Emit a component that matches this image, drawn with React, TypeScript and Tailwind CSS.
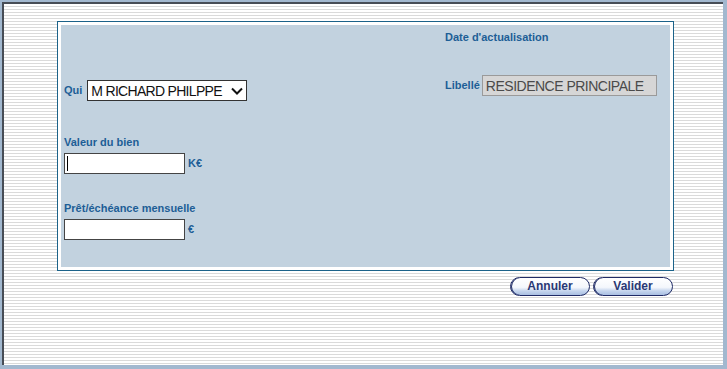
import { useState } from "react";

const label = "text-[11px] font-bold text-[#1d5e96] leading-[13px]";

function PillButton({ children }: { children: string }) {
  return (
    <button
      type="button"
      className="w-[80px] h-[19px] rounded-full border border-[#1f2b66] bg-[linear-gradient(to_bottom,#ffffff_0%,#f4f7fc_55%,#c6d6ee_75%,#a9bfe2_100%)] text-[12px] font-bold leading-[17px] text-[#2a3874] shadow-[inset_1px_0_0_#1f2b66]"
    >
      {children}
    </button>
  );
}

function Chevron() {
  return (
    <svg width="12" height="8" viewBox="0 0 12 8" className="shrink-0">
      <path d="M1 1.5 L6 6.5 L11 1.5" fill="none" stroke="#111" strokeWidth="2" />
    </svg>
  );
}

export default function App() {
  const [qui] = useState("M RICHARD PHILPPE");

  return (
    <div className="w-[727px] h-[369px] bg-[#a2b8cf] pt-[2px] pl-[2px] font-['Liberation_Sans',Arial,sans-serif]">
      <div className="w-[721px] h-[363px] border-l-2 border-t-2 border-[#474d56] bg-[repeating-linear-gradient(to_bottom,#ffffff_0px,#ffffff_2px,#dadada_2px,#dadada_3px)] pl-[53px] pt-[17px]">
        {/* panneau */}
        <div className="w-[617px] h-[250px] border border-[#1b6289] bg-white p-[3px]">
          <div className="w-full h-full bg-[#c2d2df] flex pl-[3px]">
            <div className="w-[381px] flex flex-col pt-[55px]">
              <div className="flex items-center gap-[5px]">
                <span className={label}>Qui</span>
                <div className="w-[160px] h-[21px] border border-[#333] bg-white flex items-center justify-between pl-[3px] pr-[3px]">
                  <span className="text-[14px] tracking-[-0.7px] text-[#111] leading-none">{qui}</span>
                  <Chevron />
                </div>
              </div>

              <div className={`${label} mt-[35px]`}>Valeur du bien</div>
              <div className="flex items-center gap-[3px] mt-[4px]">
                <div className="w-[121px] h-[21px] border border-[#444] bg-white flex items-center pl-[2px]">
                  <span className="w-[1px] h-[15px] bg-black" />
                </div>
                <span className={label}>K€</span>
              </div>

              <div className={`${label} mt-[28px]`}>Prêt/échéance mensuelle</div>
              <div className="flex items-center gap-[3px] mt-[4px]">
                <div className="w-[121px] h-[21px] border border-[#444] bg-white" />
                <span className={label}>€</span>
              </div>
            </div>

            <div className="flex flex-col pt-[6px]">
              <div className={label}>Date d'actualisation</div>
              <div className="flex items-center gap-[2px] mt-[31px]">
                <span className={label}>Libellé</span>
                <div className="w-[175px] h-[21px] border border-[#9a9a9a] bg-[#d6d6d6] flex items-center pl-[3px]">
                  <span className="text-[14px] tracking-[-0.5px] text-[#4a4a4a] leading-none">RESIDENCE PRINCIPALE</span>
                </div>
              </div>
            </div>
          </div>
        </div>

        <div className="w-[617px] flex justify-end gap-[3px] mt-[6px] pr-[1px]">
          <PillButton>Annuler</PillButton>
          <PillButton>Valider</PillButton>
        </div>
      </div>
    </div>
  );
}
